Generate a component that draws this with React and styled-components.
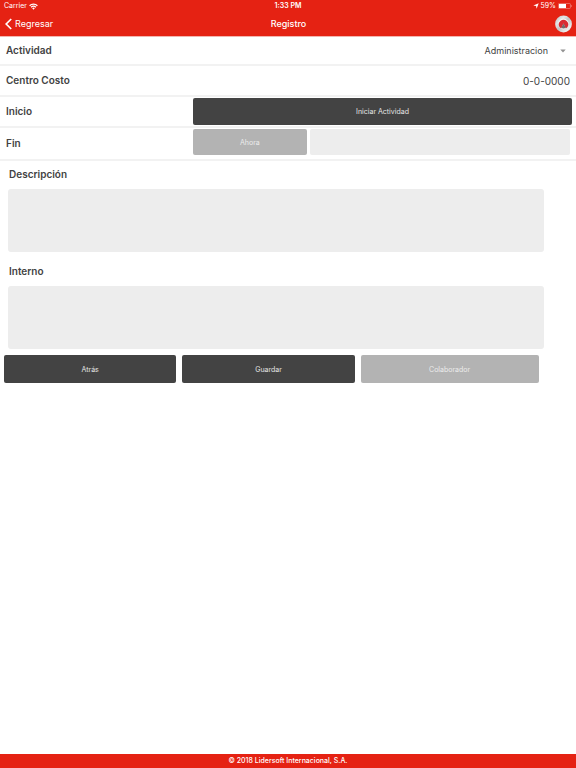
import React from 'react';
import styled, { createGlobalStyle } from 'styled-components';

const GlobalStyle = createGlobalStyle`
  *, *::before, *::after { box-sizing: border-box; }
  body {
    margin: 0;
    background: #fff;
    color: #424242;
    font-family: Inter, "Liberation Sans", sans-serif;
    font-size: 10px;
  }
  button, input, select, textarea { font: inherit; margin: 0; }
`;

const Page = styled.div`
  display: flex;
  flex-direction: column;
  min-height: 100vh;
`;

const Header = styled.header`
  background: #e52213;
  color: #fff;
  border-bottom: 1px solid #f2b5b0;
`;

const ThreeColumns = styled.div`
  display: grid;
  grid-template-columns: 1fr auto 1fr;
  align-items: center;
`;

const StatusBar = styled(ThreeColumns)`
  height: 12px;
  padding: 0 4px;
  font-size: 7px;
  line-height: 12px;
`;

const StatusGroup = styled.div`
  display: flex;
  align-items: center;
  gap: 2px;
  justify-self: ${(p) => (p.$end ? 'end' : 'start')};
`;

const Clock = styled.span`
  font-weight: 600;
`;

const NavBar = styled(ThreeColumns)`
  height: 24px;
  padding: 0 4px 0 5px;
`;

const BackLink = styled.a`
  display: flex;
  align-items: center;
  gap: 3px;
  color: inherit;
  font-size: 9px;
  line-height: 24px;
  text-decoration: none;
`;

const Title = styled.h1`
  margin: 0;
  font-size: 9px;
  font-weight: 500;
  line-height: 24px;
`;

const ProfileButton = styled.button`
  display: flex;
  justify-self: end;
  padding: 0;
  border: 0;
  background: none;
`;

const Form = styled.form`
  display: flex;
  flex: 1;
  flex-direction: column;
`;

const Row = styled.div`
  display: grid;
  grid-template-columns: 1fr 2fr;
  align-items: center;
  min-height: ${(p) => p.$height}px;
  border-bottom: 2px solid #f2f2f2;
`;

const Label = styled.label`
  padding: 0 0 2px 6px;
  font-size: 10px;
  font-weight: 600;
  line-height: 24px;
`;

const FieldLabel = styled(Label)`
  padding-left: 9px;
  line-height: 26px;
`;

const SelectBox = styled.div`
  display: flex;
  align-items: center;
  justify-content: flex-end;
  padding-right: 10px;
`;

const Select = styled.select`
  flex: 1;
  height: 27px;
  padding: 0 12px 0 0;
  border: 0;
  appearance: none;
  background: none;
  color: inherit;
  font-size: 9px;
  text-align-last: right;
`;

const Value = styled.output`
  padding-right: 6px;
  line-height: 26px;
  text-align: right;
`;

const Button = styled.button`
  height: ${(p) => p.$height}px;
  padding: 0;
  border: 0;
  border-radius: 2px;
  background: ${(p) => (p.disabled ? '#b3b3b3' : '#434343')};
  color: ${(p) => (p.disabled ? '#ececec' : '#e6e6e6')};
  font-size: 7px;
`;

const StartCell = styled.div`
  display: grid;
  padding: 1px 4px 1px 1px;
`;

const EndCell = styled.div`
  display: grid;
  grid-template-columns: 7fr 16fr;
  gap: 3px;
  padding: 1px 6px 4px 1px;
`;

const Input = styled.input`
  width: 100%;
  height: 26px;
  padding: 0 6px;
  border: 0;
  border-radius: 2px;
  background: #ededed;
`;

const Field = styled.div`
  display: flex;
  flex-direction: column;
`;

const TextArea = styled.textarea`
  width: 93%;
  height: 63px;
  margin: 0 0 6px 8px;
  padding: 6px;
  border: 0;
  border-radius: 3px;
  background: #ededed;
  resize: none;
`;

const Actions = styled.div`
  display: grid;
  grid-template-columns: 31fr 31fr 32fr;
  gap: 6px;
  width: 93.5%;
  padding-left: 4px;
`;

const Footer = styled.footer`
  background: #e52213;
  color: #fff;
  font-size: 7px;
  font-weight: 500;
  line-height: 14px;
  text-align: center;
`;

function WifiIcon() {
  return (
    <svg width="9" height="7" viewBox="0 0 9 7" fill="none" stroke="#fff" strokeWidth="1.3">
      <path d="M.6 2.7a5.5 5.5 0 0 1 7.8 0M2.1 4.3a3.4 3.4 0 0 1 4.8 0" />
      <path d="M3.2 5.3a1.8 1.8 0 0 1 2.6 0L4.5 6.7z" fill="#fff" stroke="none" />
    </svg>
  );
}

function LocationIcon() {
  return (
    <svg width="6" height="6" viewBox="0 0 6 6" fill="#fff">
      <path d="M5.7.3 3.6 5.7 3.1 2.9.3 2.4z" />
    </svg>
  );
}

function BatteryIcon() {
  return (
    <svg width="14" height="6" viewBox="0 0 14 6">
      <rect x=".4" y=".4" width="12" height="5.2" rx="1" fill="none" stroke="#f28f87" strokeWidth=".7" />
      <rect x="1" y="1" width="7" height="4" fill="#fff" />
      <path d="M13 2v2q.8-.3.8-1T13 2z" fill="#f28f87" />
    </svg>
  );
}

function ChevronIcon() {
  return (
    <svg width="7" height="12" viewBox="0 0 7 12" fill="none" stroke="#fff" strokeWidth="1.7">
      <path d="M6.2 1 1.2 6l5 5" />
    </svg>
  );
}

function ProfileIcon() {
  return (
    <svg width="17" height="18" viewBox="0 0 17 18">
      <defs>
        <linearGradient id="metal" x1="0" y1="0" x2="1" y2="1">
          <stop offset="0" stopColor="#b5b7b8" />
          <stop offset=".3" stopColor="#e4e5e6" />
          <stop offset=".5" stopColor="#c2c4c5" />
          <stop offset=".8" stopColor="#ededed" />
          <stop offset="1" stopColor="#b4b5b6" />
        </linearGradient>
      </defs>
      <circle cx="8.5" cy="9" r="8.4" fill="url(#metal)" />
      <circle cx="8.5" cy="9" r="5.4" fill="#f5f5f5" />
      <path d="M4.6 12.2a4.7 4.7 0 1 1 7.8 0L10.8 13.4 8.5 8.4 6.2 13.4z" fill="#d92b33" />
      <path d="m8.5 8.4 2.3 4.4a5 5 0 0 1-4.6 0z" fill="#74686b" />
    </svg>
  );
}

function DropIcon() {
  return (
    <svg width="6" height="4" viewBox="0 0 6 4" fill="#929292">
      <path d="M.3.5h5.4L3 3.5z" />
    </svg>
  );
}

export default function App() {
  return (
    <Page>
      <GlobalStyle />
      <Header>
        <StatusBar>
          <StatusGroup>Carrier <WifiIcon /></StatusGroup>
          <Clock>1:33 PM</Clock>
          <StatusGroup $end><LocationIcon />59% <BatteryIcon /></StatusGroup>
        </StatusBar>
        <NavBar>
          <BackLink href="#regresar"><ChevronIcon />Regresar</BackLink>
          <Title>Registro</Title>
          <ProfileButton type="button" aria-label="Perfil"><ProfileIcon /></ProfileButton>
        </NavBar>
      </Header>
      <Form>
        <Row $height={29}>
          <Label htmlFor="actividad">Actividad</Label>
          <SelectBox>
            <Select id="actividad" defaultValue="Administracion">
              <option>Administracion</option>
            </Select>
            <DropIcon />
          </SelectBox>
        </Row>
        <Row $height={31}>
          <Label htmlFor="centro">Centro Costo</Label>
          <Value id="centro">0-0-0000</Value>
        </Row>
        <Row $height={31}>
          <Label htmlFor="inicio">Inicio</Label>
          <StartCell><Button id="inicio" type="button" $height={27}>Iniciar Actividad</Button></StartCell>
        </Row>
        <Row $height={33}>
          <Label htmlFor="fin">Fin</Label>
          <EndCell>
            <Button type="button" disabled $height={26}>Ahora</Button>
            <Input id="fin" type="text" />
          </EndCell>
        </Row>
        <Field>
          <FieldLabel htmlFor="descripcion">Descripción</FieldLabel>
          <TextArea id="descripcion" />
        </Field>
        <Field>
          <FieldLabel htmlFor="interno">Interno</FieldLabel>
          <TextArea id="interno" />
        </Field>
        <Actions>
          <Button type="button" $height={28}>Atrás</Button>
          <Button type="button" $height={28}>Guardar</Button>
          <Button type="button" disabled $height={28}>Colaborador</Button>
        </Actions>
      </Form>
      <Footer>© 2018 Lidersoft Internacional, S.A.</Footer>
    </Page>
  );
}
